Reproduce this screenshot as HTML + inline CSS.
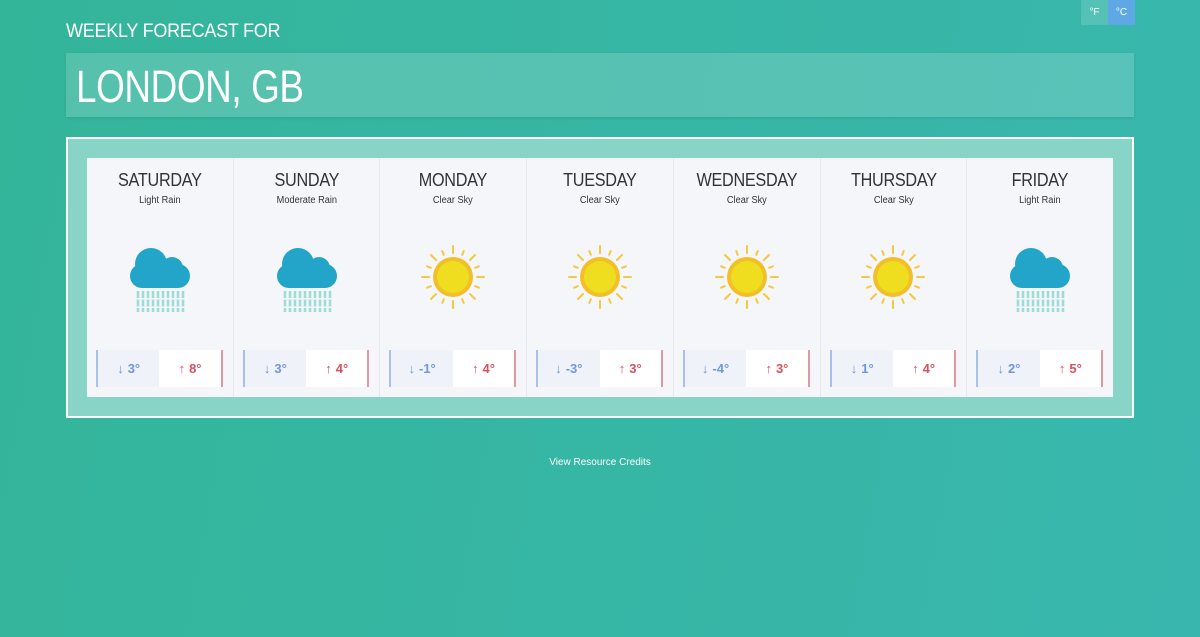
<!DOCTYPE html>
<html><head><meta charset="utf-8"><style>
*{box-sizing:border-box;margin:0;padding:0}
body{width:1200px;height:637px;overflow:hidden;background:linear-gradient(100deg,#33b59a,#39b7ae);font-family:"Liberation Sans",sans-serif;color:#fff;position:relative}
.units{position:absolute;left:1081px;top:0;display:flex;font-size:10px}
.units div{width:27px;height:25px;line-height:25px;text-align:center}
.h1{position:absolute;left:66px;top:21px;font-size:19px;letter-spacing:-0.3px;transform:scaleX(0.95);transform-origin:left}
.city{position:absolute;left:66px;top:53px;width:1068px;height:64px;background:rgba(255,255,255,0.17);box-shadow:0 1px 3px rgba(0,0,0,0.1)}
.city span{position:absolute;left:10px;top:8px;font-size:45px;letter-spacing:-0.5px;transform:scaleX(0.82);transform-origin:left;white-space:nowrap}
.outer{position:absolute;left:66px;top:137px;width:1068px;height:281px;border:2px solid #fff;background:#88d5c8}
.inner{position:absolute;left:19px;top:19px;width:1026px;height:239px;background:#f5f6fa;display:flex}
.col{flex:1;border-right:1px solid #e6e8ef;position:relative;text-align:center;color:#333}
.col:last-child{border-right:none}
.d{margin-top:12px;font-size:18px;color:#333;letter-spacing:-0.3px;transform:scaleX(0.9)}
.w{font-size:10px;margin-top:4px;color:#333;transform:scaleX(0.92)}
.ic{position:absolute;left:50%;top:84px;transform:translateX(-50%)}
.t{position:absolute;left:9px;right:10px;top:192px;height:37px;display:flex;font-size:13px;font-weight:bold}
.lo{flex:1;background:#eff2f9;border-left:2px solid #a9c1ea;color:#6f98dd;line-height:37px}
.hi{flex:1;background:#fff;border-right:2px solid #e29aa2;color:#d9505f;line-height:37px}
.lo i,.hi i{font-style:normal;font-weight:normal;margin-right:4px}
.cr{position:absolute;left:0;width:1200px;top:457px;text-align:center;font-size:10px}
</style></head><body>
<div class="units"><div style="background:rgba(255,255,255,0.15)">°F</div><div style="background:#5ea8e6">°C</div></div>
<div class="h1">WEEKLY FORECAST FOR</div>
<div class="city"><span>LONDON, GB</span></div>
<div class="outer"><div class="inner">
<div class="col"><div class="d">SATURDAY</div><div class="w">Light Rain</div><svg class="ic" width="64" height="70" viewBox="0 0 64 70"><g fill="#22a5c8"><circle cx="23" cy="22" r="16"/><circle cx="44" cy="26" r="11"/><rect x="2" y="22" width="60" height="24" rx="12"/></g><g stroke="#9fdcd8" stroke-width="2.6" stroke-dasharray="7 1.5"><path d="M10 49v21M15 49v21M20 49v21M25 49v21M30 49v21M35 49v21M40 49v21M45 49v21M50 49v21M55 49v21"/></g></svg><div class="t"><div class="lo"><i>↓</i>3°</div><div class="hi"><i>↑</i>8°</div></div></div>
<div class="col"><div class="d">SUNDAY</div><div class="w">Moderate Rain</div><svg class="ic" width="64" height="70" viewBox="0 0 64 70"><g fill="#22a5c8"><circle cx="23" cy="22" r="16"/><circle cx="44" cy="26" r="11"/><rect x="2" y="22" width="60" height="24" rx="12"/></g><g stroke="#9fdcd8" stroke-width="2.6" stroke-dasharray="7 1.5"><path d="M10 49v21M15 49v21M20 49v21M25 49v21M30 49v21M35 49v21M40 49v21M45 49v21M50 49v21M55 49v21"/></g></svg><div class="t"><div class="lo"><i>↓</i>3°</div><div class="hi"><i>↑</i>4°</div></div></div>
<div class="col"><div class="d">MONDAY</div><div class="w">Clear Sky</div><svg class="ic" width="70" height="70" viewBox="-35 -35 70 70"><g stroke="#f5c842" stroke-width="2" stroke-linecap="round"><path d="M0-24V-31M0 24V31M-24 0H-31M24 0H31M17-17L22-22M-17 17L-22 22M17 17L22 22M-17-17L-22-22"/><path d="M9.2-22.2L10.7-25.9M-9.2 22.2L-10.7 25.9M9.2 22.2L10.7 25.9M-9.2-22.2L-10.7-25.9M22.2-9.2L25.9-10.7M-22.2 9.2L-25.9 10.7M22.2 9.2L25.9 10.7M-22.2-9.2L-25.9-10.7"/></g><circle r="20" fill="#f2bf28"/><circle r="16" fill="#efdd20"/></svg><div class="t"><div class="lo"><i>↓</i>-1°</div><div class="hi"><i>↑</i>4°</div></div></div>
<div class="col"><div class="d">TUESDAY</div><div class="w">Clear Sky</div><svg class="ic" width="70" height="70" viewBox="-35 -35 70 70"><g stroke="#f5c842" stroke-width="2" stroke-linecap="round"><path d="M0-24V-31M0 24V31M-24 0H-31M24 0H31M17-17L22-22M-17 17L-22 22M17 17L22 22M-17-17L-22-22"/><path d="M9.2-22.2L10.7-25.9M-9.2 22.2L-10.7 25.9M9.2 22.2L10.7 25.9M-9.2-22.2L-10.7-25.9M22.2-9.2L25.9-10.7M-22.2 9.2L-25.9 10.7M22.2 9.2L25.9 10.7M-22.2-9.2L-25.9-10.7"/></g><circle r="20" fill="#f2bf28"/><circle r="16" fill="#efdd20"/></svg><div class="t"><div class="lo"><i>↓</i>-3°</div><div class="hi"><i>↑</i>3°</div></div></div>
<div class="col"><div class="d">WEDNESDAY</div><div class="w">Clear Sky</div><svg class="ic" width="70" height="70" viewBox="-35 -35 70 70"><g stroke="#f5c842" stroke-width="2" stroke-linecap="round"><path d="M0-24V-31M0 24V31M-24 0H-31M24 0H31M17-17L22-22M-17 17L-22 22M17 17L22 22M-17-17L-22-22"/><path d="M9.2-22.2L10.7-25.9M-9.2 22.2L-10.7 25.9M9.2 22.2L10.7 25.9M-9.2-22.2L-10.7-25.9M22.2-9.2L25.9-10.7M-22.2 9.2L-25.9 10.7M22.2 9.2L25.9 10.7M-22.2-9.2L-25.9-10.7"/></g><circle r="20" fill="#f2bf28"/><circle r="16" fill="#efdd20"/></svg><div class="t"><div class="lo"><i>↓</i>-4°</div><div class="hi"><i>↑</i>3°</div></div></div>
<div class="col"><div class="d">THURSDAY</div><div class="w">Clear Sky</div><svg class="ic" width="70" height="70" viewBox="-35 -35 70 70"><g stroke="#f5c842" stroke-width="2" stroke-linecap="round"><path d="M0-24V-31M0 24V31M-24 0H-31M24 0H31M17-17L22-22M-17 17L-22 22M17 17L22 22M-17-17L-22-22"/><path d="M9.2-22.2L10.7-25.9M-9.2 22.2L-10.7 25.9M9.2 22.2L10.7 25.9M-9.2-22.2L-10.7-25.9M22.2-9.2L25.9-10.7M-22.2 9.2L-25.9 10.7M22.2 9.2L25.9 10.7M-22.2-9.2L-25.9-10.7"/></g><circle r="20" fill="#f2bf28"/><circle r="16" fill="#efdd20"/></svg><div class="t"><div class="lo"><i>↓</i>1°</div><div class="hi"><i>↑</i>4°</div></div></div>
<div class="col"><div class="d">FRIDAY</div><div class="w">Light Rain</div><svg class="ic" width="64" height="70" viewBox="0 0 64 70"><g fill="#22a5c8"><circle cx="23" cy="22" r="16"/><circle cx="44" cy="26" r="11"/><rect x="2" y="22" width="60" height="24" rx="12"/></g><g stroke="#9fdcd8" stroke-width="2.6" stroke-dasharray="7 1.5"><path d="M10 49v21M15 49v21M20 49v21M25 49v21M30 49v21M35 49v21M40 49v21M45 49v21M50 49v21M55 49v21"/></g></svg><div class="t"><div class="lo"><i>↓</i>2°</div><div class="hi"><i>↑</i>5°</div></div></div>
</div></div>
<div class="cr">View Resource Credits</div>
</body></html>
